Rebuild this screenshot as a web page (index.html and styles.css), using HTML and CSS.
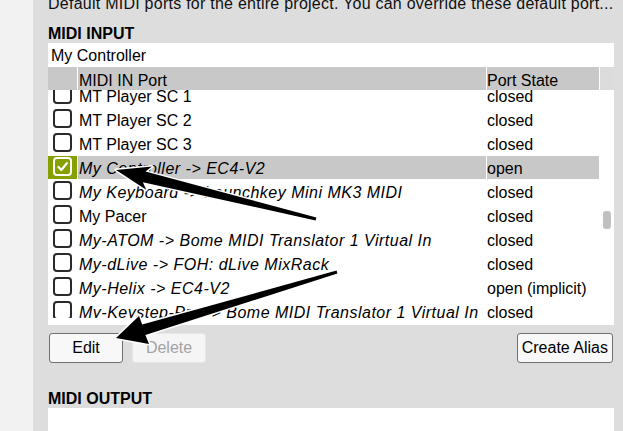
FILE: index.html
```html
<!DOCTYPE html>
<html lang="en">
<head>
<meta charset="utf-8">
<title>MIDI Ports</title>
<link rel="stylesheet" href="styles.css">
</head>
<body>
<div class="panel">
  <p class="desc">Default MIDI ports for the entire project. You can override these default port...</p>
  <h2 class="section-title">MIDI INPUT</h2>
  <div class="box">
    <div class="alias-name">My Controller</div>
    <div class="table">
      <div class="table-main">
        <div class="row head">
          <div class="cell"></div>
          <div class="cell">MIDI IN Port</div>
          <div class="cell state">Port State</div>
        </div>
        <div class="viewport">
          <div class="rows">
            <div class="row"><div class="cell check"><span class="cb"></span></div><div class="cell">MT Player SC 1</div><div class="cell state">closed</div></div>
            <div class="row"><div class="cell check"><span class="cb"></span></div><div class="cell">MT Player SC 2</div><div class="cell state">closed</div></div>
            <div class="row"><div class="cell check"><span class="cb"></span></div><div class="cell">MT Player SC 3</div><div class="cell state">closed</div></div>
            <div class="row sel"><div class="cell check"><span class="cb on"><svg viewBox="0 0 15 15" width="15" height="15"><path d="M3.5 8 L6.3 11 L11.8 4.2" fill="none" stroke="#fff" stroke-width="2.2" stroke-linecap="round" stroke-linejoin="round"/></svg></span></div><div class="cell alias">My Controller -&gt; EC4-V2</div><div class="cell state">open</div></div>
            <div class="row"><div class="cell check"><span class="cb"></span></div><div class="cell alias">My Keyboard -&gt; Launchkey Mini MK3 MIDI</div><div class="cell state">closed</div></div>
            <div class="row"><div class="cell check"><span class="cb"></span></div><div class="cell">My Pacer</div><div class="cell state">closed</div></div>
            <div class="row"><div class="cell check"><span class="cb"></span></div><div class="cell alias">My-ATOM -&gt; Bome MIDI Translator 1 Virtual In</div><div class="cell state">closed</div></div>
            <div class="row"><div class="cell check"><span class="cb"></span></div><div class="cell alias">My-dLive -&gt; FOH: dLive MixRack</div><div class="cell state">closed</div></div>
            <div class="row"><div class="cell check"><span class="cb"></span></div><div class="cell alias">My-Helix -&gt; EC4-V2</div><div class="cell state">open (implicit)</div></div>
            <div class="row"><div class="cell check"><span class="cb"></span></div><div class="cell alias">My-Keystep-Pro -&gt; Bome MIDI Translator 1 Virtual In</div><div class="cell state">closed</div></div>
          </div>
        </div>
      </div>
      <div class="scrollbar">
        <div class="sb-head"></div>
        <div class="sb-track"><div class="sb-thumb"></div></div>
      </div>
    </div>
  </div>
  <div class="buttons">
    <button class="btn">Edit</button>
    <button class="btn" disabled>Delete</button>
    <span class="spacer"></span>
    <button class="btn">Create Alias</button>
  </div>
  <h2 class="section-title out">MIDI OUTPUT</h2>
  <div class="box box-out"></div>
</div>
<svg class="arrows" width="623" height="431" viewBox="0 0 623 431">
  <path d="M116 170 L146.2 189.8 L142.9 182.2 L315.6 220.5 L316.4 217.5 L145.5 171.6 L151.9 166.4 Z" fill="#000" stroke="#fff" stroke-width="3" stroke-linejoin="round" paint-order="stroke"/>
  <path d="M116 338 L149 344 L145.4 335 L337.4 273.4 L336.6 270.6 L142.2 324.4 L139 316 Z" fill="#000" stroke="#fff" stroke-width="3" stroke-linejoin="round" paint-order="stroke"/>
</svg>
</body>
</html>
```
FILE: styles.css
```css
* { box-sizing: border-box; }
html, body { margin: 0; height: 100%; }
body {
  background: #f2f2f2;
  font-family: "Liberation Sans", Arial, sans-serif;
  font-size: 16px;
  color: #000;
  overflow: hidden;
  position: relative;
}
.panel {
  margin-left: 33px;
  width: 590px;
  height: 431px;
  background: #dddddd;
  padding: 0 9px 0 15px;
  overflow: hidden;
}
.desc {
  margin: -5px 0 0;
  line-height: 18px;
  white-space: nowrap;
  overflow: hidden;
  letter-spacing: 0.25px;
  color: #111;
}
.section-title {
  margin: 12px 0 0;
  font-size: 16px;
  font-weight: bold;
  line-height: 18px;
}
.section-title.out { margin-top: 27px; }
.box { background: #fff; padding-bottom: 7px; }
.box-out { height: 60px; }
.alias-name { height: 24px; padding: 3px 0 0 3px; line-height: 20px; }
.table { display: flex; gap: 1px; }
.table-main { width: 551px; }
.row {
  display: grid;
  grid-template-columns: 29px 408px 112px;
  column-gap: 1px;
  height: 23px;
}
.cell {
  padding: 2px 0 0 1px;
  line-height: 21px;
  white-space: nowrap;
  overflow: hidden;
}
.cell.state { padding-left: 0; }
.head .cell { background: #c8c8c8; padding-top: 5px; line-height: 18px; }
.viewport { height: 228px; overflow: hidden; }
.rows { margin-top: -6px; }
.rows .row { margin-bottom: 1px; }
.alias { font-style: italic; letter-spacing: 0.5px; }
.cell.check { padding: 1px 0 0 5px; }
.cb {
  display: block;
  width: 19px;
  height: 19px;
  border: 2px solid #2a2a2a;
  border-radius: 4px;
  background: #fff;
}
.cb svg { display: block; }
.row.sel .cell { background: #c8c8c8; }
.row.sel .cell.check { background: #86a000; }
.cb.on { background: transparent; border-color: #fff; }
.scrollbar { width: 14px; display: flex; flex-direction: column; }
.sb-head { height: 23px; background: #dcdcdc; }
.sb-track { flex: 1; padding: 121px 0 0 3px; }
.sb-thumb { width: 8px; height: 18px; background: #c1c1c1; border-radius: 3px; }
.buttons { display: flex; gap: 9px; margin-top: 8px; padding: 0 1px; }
.spacer { flex: 1; }
.btn {
  height: 30px;
  min-width: 74px;
  padding: 0 4px;
  font-family: "Liberation Sans", Arial, sans-serif;
  font-size: 16px;
  color: #000;
  background: #f8f8f8;
  border: 1px solid #6f6f6f;
  border-radius: 3px;
}
.btn:disabled {
  color: #a3a3a3;
  background: #f5f5f5;
  border-color: #e6e6e6;
}
.arrows { position: absolute; left: 0; top: 0; pointer-events: none; }
```
